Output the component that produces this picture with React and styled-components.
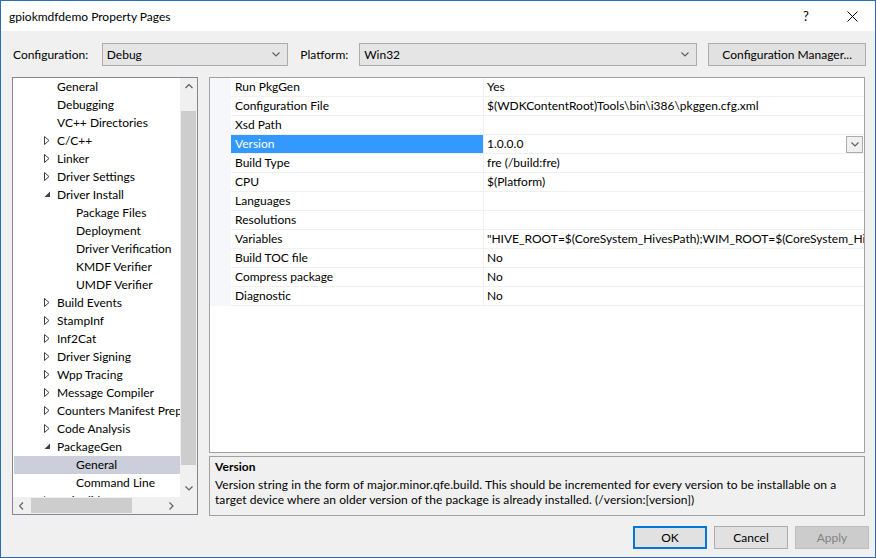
import styled, { createGlobalStyle } from 'styled-components'

const FONT = `Lato, "Noto Sans", "Liberation Sans", sans-serif`

const GlobalStyle = createGlobalStyle`
  html, body {
    margin: 0;
    padding: 0;
    background: #f0f0f0;
  }
  * {
    box-sizing: border-box;
  }
`

const Window = styled.div`
  width: 876px;
  height: 558px;
  border: 1px solid #2a6db5;
  background: #f0f0f0;
  display: flex;
  flex-direction: column;
  font-family: ${FONT};
  font-size: 12px;
  color: #000;
  overflow: hidden;
`

const TitleBar = styled.div`
  height: 30px;
  background: #fff;
  display: flex;
  align-items: center;
  padding-left: 8px;
`

const TitleText = styled.div`
  flex: 1;
  font-size: 12px;
`

const TitleButton = styled.div`
  width: 46px;
  height: 30px;
  display: flex;
  align-items: center;
  justify-content: center;
  font-size: 13px;
`

const Content = styled.div`
  flex: 1;
  display: flex;
  flex-direction: column;
  padding: 12px 9px 0 11px;
`

const ConfigRow = styled.div`
  display: flex;
  align-items: center;
  height: 23px;
`

const Label = styled.div`
  width: ${p => p.$w}px;
  padding-left: 1px;
`

const Combo = styled.div`
  width: ${p => p.$w}px;
  height: 23px;
  border: 1px solid #acacac;
  background: #e5e5e5;
  display: flex;
  align-items: center;
  justify-content: space-between;
  padding: 0 7px 0 4px;
  margin-right: 11px;
`

const PushButton = styled.div`
  width: ${p => p.$w}px;
  height: 23px;
  display: flex;
  align-items: center;
  justify-content: center;
  background: ${p => (p.$disabled ? '#cccccc' : '#e1e1e1')};
  border: ${p =>
    p.$default ? '2px solid #0078d7' : p.$disabled ? '1px solid #bfbfbf' : '1px solid #adadad'};
  color: ${p => (p.$disabled ? '#838383' : '#000')};
`

const Main = styled.div`
  display: flex;
  gap: 11px;
  height: 439px;
  margin-top: 11px;
`

const TreePanel = styled.div`
  width: 186px;
  height: 438px;
  border: 1px solid #828790;
  background: #fff;
  display: grid;
  grid-template-columns: 167px 17px;
  grid-template-rows: 419px 17px;
`

const TreeList = styled.div`
  overflow: hidden;
  padding-left: 1px;
`

const TreeRow = styled.div`
  height: 18px;
  display: flex;
  align-items: center;
  white-space: nowrap;
  padding-bottom: 1px;
  padding-left: ${p => 29 + p.$level * 19}px;
  background: ${p => (p.$selected ? '#cccedb' : 'transparent')};
`

const Expander = styled.div`
  width: 14px;
  flex: none;
  display: flex;
  align-items: center;
  padding-left: 1px;
`

const VScroll = styled.div`
  background: #f0f0f0;
  display: flex;
  flex-direction: column;
  align-items: center;
`

const HScroll = styled.div`
  background: #f0f0f0;
  display: flex;
  align-items: center;
`

const ArrowBox = styled.div`
  width: 17px;
  height: 17px;
  flex: none;
  display: flex;
  align-items: center;
  justify-content: center;
`

const VThumb = styled.div`
  width: 15px;
  height: 354px;
  margin-top: 16px;
  background: #cdcdcd;
`

const HThumb = styled.div`
  width: 101px;
  height: 15px;
  margin-left: 1px;
  background: #cdcdcd;
`

const Spacer = styled.div`
  flex: 1;
`

const Corner = styled.div`
  background: #f0f0f0;
`

const RightColumn = styled.div`
  width: 656px;
  display: flex;
  flex-direction: column;
  gap: 3px;
`

const Grid = styled.div`
  height: 377px;
  border: 1px solid #a0a0a0;
  background: #fff;
`

const PropRow = styled.div`
  display: grid;
  grid-template-columns: 21px 253px 1fr;
  height: 19px;
`

const Gutter = styled.div`
  background: #f5f7fa;
`

const NameCell = styled.div`
  display: flex;
  align-items: center;
  padding: 0 0 1px 4px;
  border-right: 1px solid #f0f0f0;
  border-bottom: 1px solid #f0f0f0;
  background: ${p => (p.$selected ? '#3399ff' : '#fff')};
  color: ${p => (p.$selected ? '#fff' : '#000')};
  white-space: nowrap;
`

const ValueCell = styled.div`
  display: flex;
  align-items: center;
  padding-left: 3px;
  border-bottom: 1px solid #f0f0f0;
  white-space: nowrap;
  overflow: hidden;
`

const ValueText = styled.span`
  flex: 1;
  overflow: hidden;
  padding-bottom: 1px;
`

const DropButton = styled.div`
  width: 17px;
  height: 17px;
  flex: none;
  margin-right: 1px;
  border: 1px solid #acacac;
  background: #f0f0f0;
  display: flex;
  align-items: center;
  justify-content: center;
`

const Description = styled.div`
  height: 60px;
  border: 1px solid #a0a0a0;
  background: #f0f0f0;
  padding: 2px 5px;
  line-height: 15px;
  letter-spacing: 0.06px;
`

const DescTitle = styled.div`
  font-weight: bold;
  margin-bottom: 3px;
`

const DescLine = styled.div`
  white-space: nowrap;
`

const ButtonRow = styled.div`
  display: flex;
  justify-content: flex-end;
  gap: 7px;
  margin-top: 10px;
  margin-right: -3px;
`

const Chevron = ({ dir = 'down', color = '#606060' }) => {
  const pts = {
    down: '0.5,0.5 4,4 7.5,0.5',
    up: '0.5,4 4,0.5 7.5,4',
    left: '4,0.5 0.5,4 4,7.5',
    right: '0.5,0.5 4,4 0.5,7.5',
  }[dir]
  const vertical = dir === 'up' || dir === 'down'
  return (
    <svg width={vertical ? 8 : 5} height={vertical ? 5 : 8} viewBox={vertical ? '0 0 8 5' : '0 0 5 8'}>
      <polyline points={pts} fill='none' stroke={color} strokeWidth='1.2' />
    </svg>
  )
}

const Expand = ({ open }) =>
  open ? (
    <svg width='7' height='7' viewBox='0 0 7 7'>
      <polygon points='6,0.5 6,6 0.5,6' fill='#404040' />
    </svg>
  ) : (
    <svg width='6' height='9' viewBox='0 0 6 9'>
      <polygon points='0.5,0.5 5,4.5 0.5,8.5' fill='none' stroke='#404040' strokeWidth='1' />
    </svg>
  )

const treeItems = [
  { text: 'General', level: 0 },
  { text: 'Debugging', level: 0 },
  { text: 'VC++ Directories', level: 0 },
  { text: 'C/C++', level: 0, exp: 'closed' },
  { text: 'Linker', level: 0, exp: 'closed' },
  { text: 'Driver Settings', level: 0, exp: 'closed' },
  { text: 'Driver Install', level: 0, exp: 'open' },
  { text: 'Package Files', level: 1 },
  { text: 'Deployment', level: 1 },
  { text: 'Driver Verification', level: 1 },
  { text: 'KMDF Verifier', level: 1 },
  { text: 'UMDF Verifier', level: 1 },
  { text: 'Build Events', level: 0, exp: 'closed' },
  { text: 'StampInf', level: 0, exp: 'closed' },
  { text: 'Inf2Cat', level: 0, exp: 'closed' },
  { text: 'Driver Signing', level: 0, exp: 'closed' },
  { text: 'Wpp Tracing', level: 0, exp: 'closed' },
  { text: 'Message Compiler', level: 0, exp: 'closed' },
  { text: 'Counters Manifest Preprocessor', level: 0, exp: 'closed' },
  { text: 'Code Analysis', level: 0, exp: 'closed' },
  { text: 'PackageGen', level: 0, exp: 'open' },
  { text: 'General', level: 1, selected: true },
  { text: 'Command Line', level: 1 },
  { text: 'ApiValidator', level: 0, exp: 'closed' },
]

const props = [
  ['Run PkgGen', 'Yes'],
  ['Configuration File', '$(WDKContentRoot)Tools\\bin\\i386\\pkggen.cfg.xml'],
  ['Xsd Path', ''],
  ['Version', '1.0.0.0', true],
  ['Build Type', 'fre (/build:fre)'],
  ['CPU', '$(Platform)'],
  ['Languages', ''],
  ['Resolutions', ''],
  ['Variables', '"HIVE_ROOT=$(CoreSystem_HivesPath);WIM_ROOT=$(CoreSystem_HivesPath)"'],
  ['Build TOC file', 'No'],
  ['Compress package', 'No'],
  ['Diagnostic', 'No'],
]

const App = () => {
  return (
    <>
      <GlobalStyle />
      <Window>
        <TitleBar>
          <TitleText>gpiokmdfdemo Property Pages</TitleText>
          <TitleButton>?</TitleButton>
          <TitleButton>
            <svg width='11' height='11' viewBox='0 0 11 11'>
              <path d='M0.5 0.5 L10.5 10.5 M10.5 0.5 L0.5 10.5' stroke='#000' strokeWidth='1' />
            </svg>
          </TitleButton>
        </TitleBar>
        <Content>
          <ConfigRow>
            <Label $w={90}>Configuration:</Label>
            <Combo $w={187}>
              <span>Debug</span>
              <Chevron />
            </Combo>
            <Label $w={60}>Platform:</Label>
            <Combo $w={339}>
              <span>Win32</span>
              <Chevron />
            </Combo>
            <PushButton $w={158}>Configuration Manager...</PushButton>
          </ConfigRow>
          <Main>
            <TreePanel>
              <TreeList>
                {treeItems.map((it, i) => (
                  <TreeRow key={i} $level={it.level} $selected={it.selected}>
                    <Expander>{it.exp && <Expand open={it.exp === 'open'} />}</Expander>
                    {it.text}
                  </TreeRow>
                ))}
              </TreeList>
              <VScroll>
                <ArrowBox>
                  <Chevron dir='up' />
                </ArrowBox>
                <VThumb />
                <Spacer />
                <ArrowBox>
                  <Chevron dir='down' />
                </ArrowBox>
              </VScroll>
              <HScroll>
                <ArrowBox>
                  <Chevron dir='left' />
                </ArrowBox>
                <HThumb />
                <Spacer />
                <ArrowBox>
                  <Chevron dir='right' />
                </ArrowBox>
              </HScroll>
              <Corner />
            </TreePanel>
            <RightColumn>
              <Grid>
                {props.map(([name, value, selected]) => (
                  <PropRow key={name}>
                    <Gutter />
                    <NameCell $selected={selected}>{name}</NameCell>
                    <ValueCell>
                      <ValueText>{value}</ValueText>
                      {selected && (
                        <DropButton>
                          <Chevron />
                        </DropButton>
                      )}
                    </ValueCell>
                  </PropRow>
                ))}
              </Grid>
              <Description>
                <DescTitle>Version</DescTitle>
                <DescLine>
                  Version string in the form of major.minor.qfe.build. This should be incremented for every version to be installable on a
                </DescLine>
                <DescLine>
                  target device where an older version of the package is already installed. (/version:[version])
                </DescLine>
              </Description>
            </RightColumn>
          </Main>
          <ButtonRow>
            <PushButton $w={74} $default>OK</PushButton>
            <PushButton $w={74}>Cancel</PushButton>
            <PushButton $w={74} $disabled>Apply</PushButton>
          </ButtonRow>
        </Content>
      </Window>
    </>
  )
}

export default App
